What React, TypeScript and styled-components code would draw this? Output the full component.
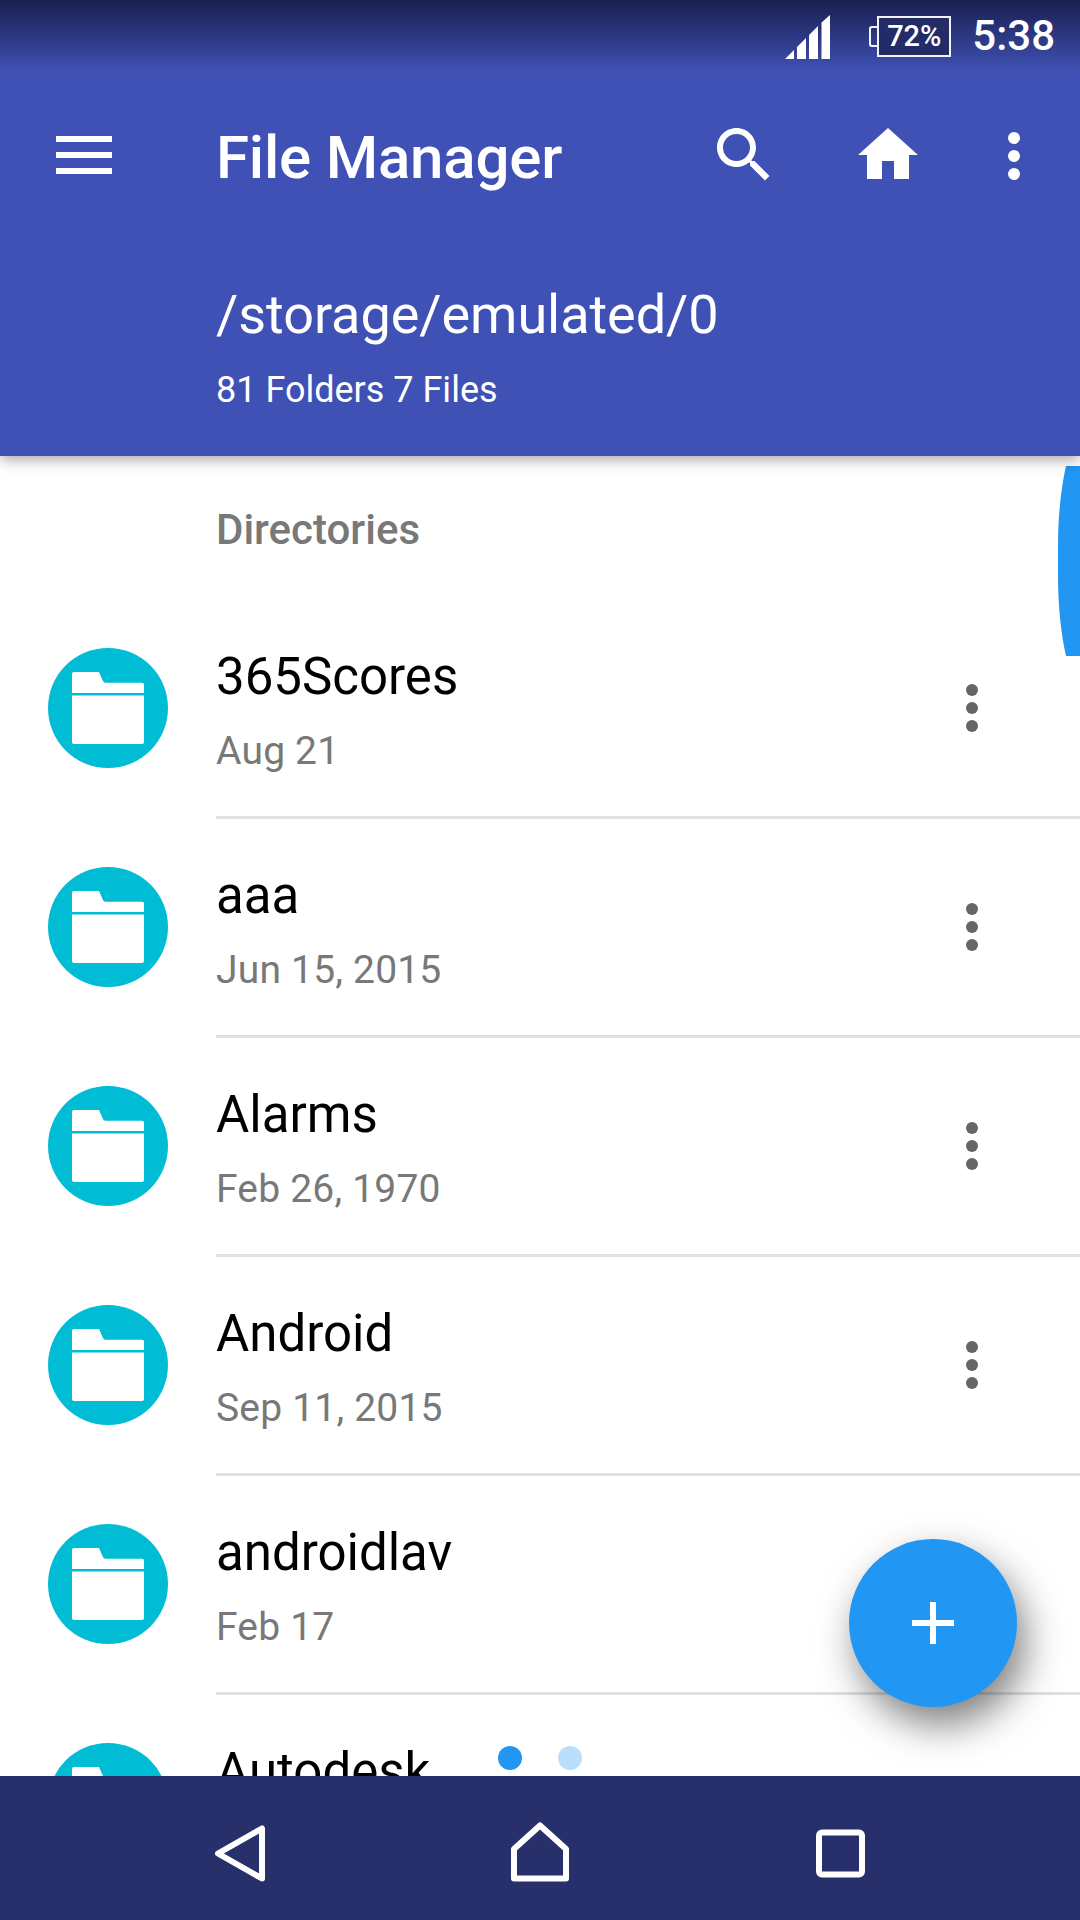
import React from "react";
import styled, { createGlobalStyle } from "styled-components";

const GlobalStyle = createGlobalStyle`
  html, body {
    margin: 0;
    padding: 0;
    background: #fff;
    font-family: Roboto, "Noto Sans", sans-serif;
  }
`;

const Screen = styled.div`
  position: relative;
  display: flex;
  flex-direction: column;
  width: 1080px;
  height: 1920px;
  overflow: hidden;
  background: #fff;
`;

const AppBar = styled.header`
  position: relative;
  z-index: 2;
  flex: none;
  height: 456px;
  background: #3f51b5;
  box-shadow: 0 3px 14px rgba(0, 0, 0, 0.38);
  color: #fff;
`;

const StatusBar = styled.div`
  display: flex;
  align-items: center;
  justify-content: flex-end;
  height: 72px;
  padding-right: 25px;
  background: linear-gradient(#1a1f4e, #3f51b5);
`;

const SignalIcon = styled.svg`
  width: 45px;
  height: 44px;
  margin: 2px 47px 0 0;
  fill: #fff;
`;

const Battery = styled.div`
  position: relative;
  box-sizing: border-box;
  display: flex;
  align-items: center;
  justify-content: center;
  width: 74px;
  height: 41px;
  margin-right: 21px;
  border: 2px solid #f2f3fa;
  background: #232c66;
  font-size: 29px;
  font-weight: 500;

  &::before {
    content: "";
    position: absolute;
    left: -10px;
    top: 8px;
    width: 10px;
    height: 21px;
    box-sizing: border-box;
    border: 2px solid #f2f3fa;
    border-right: 0;
    border-radius: 3px 0 0 3px;
  }
`;

const Clock = styled.span`
  font-size: 42px;
  font-weight: 500;
  line-height: 50px;
`;

const Toolbar = styled.div`
  display: flex;
  align-items: center;
  height: 168px;
  padding: 0 30px 0 56px;
`;

const MenuButton = styled.div`
  display: flex;
  flex-direction: column;
  gap: 10px;
  width: 56px;
  margin-right: 104px;
  transform: translateY(-1px);

  span {
    height: 6px;
    background: #fff;
  }
`;

const Title = styled.h1`
  flex: 1;
  margin: 3px 0 0;
  font-size: 60px;
  font-weight: 500;
  letter-spacing: -0.2px;
  line-height: 72px;
`;

const ToolIcons = styled.div`
  display: flex;
  align-items: center;
  gap: 72px;
`;

const ToolIcon = styled.svg`
  display: block;
  width: 72px;
  height: 72px;
  fill: #fff;
  transform: translateY(-1px);
`;

const Dots = styled.div<{ $color: string; $width: number; $pull?: number }>`
  display: flex;
  flex-direction: column;
  align-items: center;
  gap: 6px;
  width: ${({ $width }) => $width}px;
  margin-left: ${({ $pull = 0 }) => -$pull}px;

  i {
    width: 12px;
    height: 12px;
    border-radius: 50%;
    background: ${({ $color }) => $color};
  }
`;

const PathBlock = styled.div`
  padding-left: 216px;
`;

const PathText = styled.div`
  font-size: 54px;
  letter-spacing: -0.05px;
  line-height: 60px;
  margin-top: 45px;
`;

const CountText = styled.div`
  font-size: 36px;
  line-height: 40px;
  margin-top: 25px;
`;

const List = styled.main`
  flex: 1;
  overflow: hidden;
`;

const SectionLabel = styled.div`
  height: 144px;
  padding: 51px 0 0 216px;
  box-sizing: border-box;
  font-size: 42px;
  font-weight: 500;
  line-height: 46px;
  color: #787878;
`;

const Row = styled.div`
  display: flex;
  align-items: flex-start;
  height: 219px;
  box-sizing: border-box;
`;

const FolderBadge = styled.div`
  flex: none;
  display: flex;
  align-items: center;
  justify-content: center;
  width: 120px;
  height: 120px;
  margin: 48px 48px 0;
  border-radius: 50%;
  background: #00bcd4;
`;

const FolderIcon = styled.svg`
  width: 72px;
  height: 72px;
  fill: #fff;
`;

const RowBody = styled.div`
  flex: 1;
  display: flex;
  align-items: flex-start;
  height: 219px;
  box-sizing: border-box;
  border-bottom: 3px solid #e0e0e0;
`;

const RowText = styled.div`
  flex: 1;
  padding-top: 47px;
`;

const FileName = styled.div`
  font-size: 51px;
  line-height: 60px;
  color: #000;
`;

const FileDate = styled.div`
  margin-top: 22px;
  font-size: 39px;
  letter-spacing: 0.2px;
  line-height: 44px;
  color: #787878;
`;

const RowMenu = styled.div`
  margin: 84px 96px 0 0;
`;

const ScrollHandle = styled.svg`
  position: absolute;
  right: 0;
  top: 466px;
  width: 22px;
  height: 190px;
  fill: #2196f3;
  z-index: 1;
`;

const Fab = styled.div`
  position: absolute;
  left: 849px;
  top: 1539px;
  display: flex;
  align-items: center;
  justify-content: center;
  width: 168px;
  height: 168px;
  border-radius: 50%;
  background: #2196f3;
  box-shadow: 8px 18px 38px rgba(0, 0, 0, 0.5);
  z-index: 1;
`;

const PlusIcon = styled.svg`
  width: 42px;
  height: 42px;
  fill: #fff;
`;

const Pager = styled.div`
  position: absolute;
  left: 498px;
  top: 1746px;
  display: flex;
  gap: 36px;
  z-index: 1;
`;

const PagerDot = styled.span<{ $active?: boolean }>`
  width: 24px;
  height: 24px;
  border-radius: 50%;
  background: ${({ $active }) => ($active ? "#2196f3" : "#bbdefb")};
`;

const NavBar = styled.nav`
  position: relative;
  z-index: 2;
  flex: none;
  display: grid;
  grid-template-columns: 212px 60px 239px 60px 245px 50px 1fr;
  align-items: center;
  height: 144px;
  padding-top: 3px;
  box-sizing: border-box;
  background: #27306b;
`;

const NavIcon = styled.svg<{ $column: number; $width?: number }>`
  grid-column: ${({ $column }) => $column};
  grid-row: 1;
  display: block;
  width: ${({ $width = 60 }) => $width}px;
  height: 64px;
  fill: none;
  stroke: #fff;
  stroke-width: 6;
  stroke-linejoin: round;
`;

type Folder = { name: string; date?: string };

const folders: Folder[] = [
  { name: "365Scores", date: "Aug 21" },
  { name: "aaa", date: "Jun 15, 2015" },
  { name: "Alarms", date: "Feb 26, 1970" },
  { name: "Android", date: "Sep 11, 2015" },
  { name: "androidlav", date: "Feb 17" },
  { name: "Autodesk" },
];

const FolderRow = ({ name, date, showMenu }: Folder & { showMenu: boolean }) => (
  <Row>
    <FolderBadge>
      <FolderIcon viewBox="0 0 72 72">
        <path d="M2 0h25l4 9q.6 1.700 2.500 1.700H70q2 0 2 2V21H0V2q0-2 2-2zM0 23.500h72V70q0 2-2 2H2q-2 0-2-2z" />
      </FolderIcon>
    </FolderBadge>
    <RowBody>
      <RowText>
        <FileName>{name}</FileName>
        {date && <FileDate>{date}</FileDate>}
      </RowText>
      {showMenu && (
        <RowMenu>
          <Dots $color="#666" $width={24}>
            <i />
            <i />
            <i />
          </Dots>
        </RowMenu>
      )}
    </RowBody>
  </Row>
);

export default function App() {
  return (
    <Screen>
      <GlobalStyle />
      <AppBar>
        <StatusBar>
          <SignalIcon viewBox="0 0 45 44">
            <path d="M0 44l9-9v9zM12 44V32l9-9v21zM24 44V20l9-9v33zM36.500 44V7.500L45 0v44z" />
          </SignalIcon>
          <Battery>72%</Battery>
          <Clock>5:38</Clock>
        </StatusBar>
        <Toolbar>
          <MenuButton>
            <span />
            <span />
            <span />
          </MenuButton>
          <Title>File Manager</Title>
          <ToolIcons>
            <ToolIcon viewBox="0 0 24 24">
              <path d="M15.500 14h-.79l-.28-.27C15.410 12.590 16 11.110 16 9.500 16 5.910 13.090 3 9.500 3S3 5.910 3 9.500 5.910 16 9.500 16c1.610 0 3.090-.59 4.230-1.570l.27.28v.79l5 4.990L20.490 19l-4.990-5zm-6 0C7.010 14 5 11.990 5 9.500S7.010 5 9.500 5 14 7.010 14 9.500 11.990 14 9.500 14z" />
            </ToolIcon>
            <ToolIcon viewBox="0 0 24 24">
              <path d="M10 20v-6h4v6h5v-8h3L12 3 2 12h3v8z" />
            </ToolIcon>
            <Dots $color="#fff" $width={72} $pull={18}>
              <i />
              <i />
              <i />
            </Dots>
          </ToolIcons>
        </Toolbar>
        <PathBlock>
          <PathText>/storage/emulated/0</PathText>
          <CountText>81 Folders 7 Files</CountText>
        </PathBlock>
      </AppBar>
      <List>
        <SectionLabel>Directories</SectionLabel>
        {folders.map((folder, index) => (
          <FolderRow key={folder.name} {...folder} showMenu={index < 4} />
        ))}
      </List>
      <ScrollHandle viewBox="0 0 22 190">
        <path d="M8 0C3 22 0 50 0 80v30c0 30 3 58 8 80h14V0z" />
      </ScrollHandle>
      <Fab>
        <PlusIcon viewBox="0 0 42 42">
          <path d="M18 0h6v18h18v6H24v18h-6V24H0v-6h18z" />
        </PlusIcon>
      </Fab>
      <Pager>
        <PagerDot $active />
        <PagerDot />
      </Pager>
      <NavBar>
        <NavIcon $column={2} viewBox="0 0 60 64">
          <path d="M50 10.500v50L6 35.500z" />
        </NavIcon>
        <NavIcon $column={4} viewBox="0 0 60 64">
          <path d="M29 7.500L55 31v29.500H3V31z" />
        </NavIcon>
        <NavIcon $column={6} $width={50} viewBox="0 0 50 64">
          <rect x="3" y="14.500" width="43" height="42" rx="3" />
        </NavIcon>
      </NavBar>
    </Screen>
  );
}
